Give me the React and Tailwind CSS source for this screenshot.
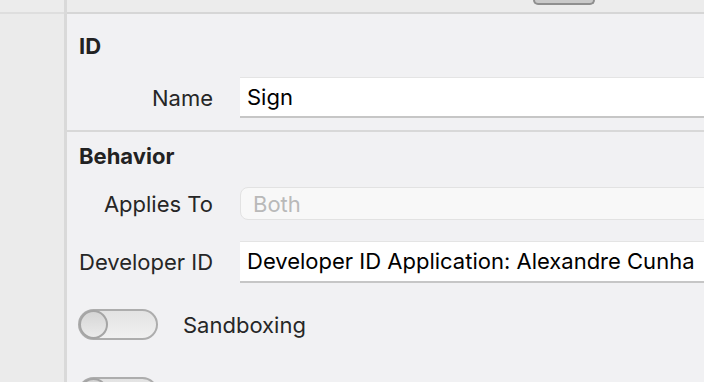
import React from "react";

function Toggle() {
  return (
    <div className="relative w-[80px] h-[31px] shrink-0 rounded-full border-2 border-[#adadad] bg-gradient-to-b from-[#e3e3e3] to-[#f0f0f0]">
      <div className="absolute -left-[1px] -top-[1px] w-[29px] h-[29px] rounded-full border-2 border-[#a5a5a5] bg-gradient-to-b from-[#d6d6d6] to-[#ebebeb]" />
    </div>
  );
}

function Row({ label, children }) {
  return (
    <div className="flex items-center">
      <div className="w-[134px] shrink-0 text-right text-[#262626] whitespace-nowrap">{label}</div>
      <div className="ml-[27px] flex-1">{children}</div>
    </div>
  );
}

export default function App() {
  return (
    <div
      className="flex w-[704px] h-[382px] overflow-hidden bg-[#f1f1f3] text-[22px] leading-[24px]"
      style={{ fontFamily: "Inter, 'Liberation Sans', sans-serif" }}
    >
      {/* sidebar */}
      <div className="w-[67px] shrink-0 flex flex-col bg-[#ebebeb] border-r-[3px] border-[#d9d9d9]">
        <div className="h-[14px] shrink-0 border-b-2 border-[#dedede] bg-[#ececec]" />
      </div>

      {/* main */}
      <div className="flex-1 flex flex-col min-w-0 overflow-hidden">
        {/* top strip */}
        <div className="h-[14px] shrink-0 flex border-b-2 border-[#d6d6d6] bg-[#ececec]">
          <div className="ml-[466px] w-[62px] h-[5px] rounded-b-[6px] border-2 border-t-0 border-[#8f8f8f] bg-[#c9c9c9]" />
        </div>

        {/* ID section */}
        <div className="pl-[12px] pt-[20px] pb-[12px]">
          <div className="font-bold text-[#222]">ID</div>
          <div className="mt-[19px]">
            <Row label="Name">
              <div className="h-[41px] w-[520px] flex items-center pl-[7px] pb-[1px] bg-white border-t border-[#e4e4e4] border-b-2 border-b-[#c6c6c6] text-black">
                Sign
              </div>
            </Row>
          </div>
        </div>

        <div className="h-[2px] shrink-0 bg-[#d8d8d8]" />

        {/* Behavior section */}
        <div className="pl-[12px] pt-[12px]">
          <div className="font-bold text-[#222]">Behavior</div>
          <div className="mt-[19px]">
            <Row label="Applies To">
              <div className="h-[33px] w-[520px] flex items-center pl-[12px] rounded-[8px] bg-[#f8f8f8] border border-[#e2e2e2] text-[#b9b9b9]">
                Both
              </div>
            </Row>
          </div>
          <div className="mt-[21px]">
            <Row label="Developer ID">
              <div className="h-[42px] w-[520px] flex items-center pl-[7px] pb-[1px] bg-white border-t border-[#e4e4e4] border-b-2 border-b-[#c6c6c6] text-black whitespace-nowrap">
                Developer ID Application: Alexandre Cunha
              </div>
            </Row>
          </div>
          <div className="mt-[26px] flex items-center -ml-[1px]">
            <Toggle />
            <span className="ml-[25px] text-[#262626]">Sandboxing</span>
          </div>
          <div className="mt-[37px] flex items-center -ml-[1px]">
            <Toggle />
          </div>
        </div>
      </div>
    </div>
  );
}
